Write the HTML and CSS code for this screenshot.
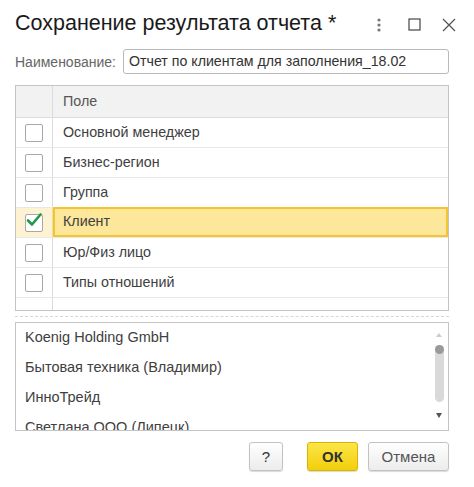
FILE: index.html
```html
<!DOCTYPE html>
<html lang="ru">
<head>
<meta charset="utf-8">
<link rel="stylesheet" href="styles.css">
</head>
<body>
<div class="dialog">
  <div class="titlebar">
    <div class="title">Сохранение результата отчета *</div>
    <div class="tools">
      <svg class="ico kebab" width="8" height="14" viewBox="0 0 8 14"><circle cx="4" cy="2" r="1.6" fill="#777"/><circle cx="4" cy="7" r="1.6" fill="#777"/><circle cx="4" cy="12" r="1.6" fill="#777"/></svg>
      <svg class="ico square" width="13" height="13" viewBox="0 0 13 13"><rect x="1" y="1" width="11" height="11" fill="none" stroke="#444" stroke-width="1.2"/></svg>
      <svg class="ico close" width="14" height="14" viewBox="0 0 14 14"><path d="M1 1 L13 13 M13 1 L1 13" stroke="#555" stroke-width="1.3" fill="none"/></svg>
    </div>
  </div>

  <div class="namerow">
    <span class="label">Наименование:</span>
    <div class="input">Отчет по клиентам для заполнения_18.02</div>
  </div>

  <div class="grid">
    <div class="row head"><div class="cb-cell"></div><div class="txt">Поле</div></div>
    <div class="row"><div class="cb-cell"><span class="cb"></span></div><div class="txt">Основной менеджер</div></div>
    <div class="row"><div class="cb-cell"><span class="cb"></span></div><div class="txt">Бизнес-регион</div></div>
    <div class="row"><div class="cb-cell"><span class="cb"></span></div><div class="txt">Группа</div></div>
    <div class="row sel"><div class="cb-cell"><span class="cb"><svg class="check" width="18" height="16" viewBox="0 0 18 16"><path d="M3 8.5 L7 12.5 L15.5 2.5" stroke="#1f9a4a" stroke-width="2.6" fill="none" stroke-linecap="round" stroke-linejoin="round"/></svg></span></div><div class="txt">Клиент</div></div>
    <div class="row"><div class="cb-cell"><span class="cb"></span></div><div class="txt">Юр/Физ лицо</div></div>
    <div class="row"><div class="cb-cell"><span class="cb"></span></div><div class="txt">Типы отношений</div></div>
    <div class="filler"><div class="cb-cell"></div><div class="txt"></div></div>
  </div>

  <div class="sep"></div>

  <div class="listbox">
    <div class="items">
      <div class="item">Koenig Holding GmbH</div>
      <div class="item">Бытовая техника (Владимир)</div>
      <div class="item">ИнноТрейд</div>
      <div class="item">Светлана ООО (Липецк)</div>
    </div>
    <div class="scroll">
      <span class="arrow up"></span>
      <span class="track"><span class="thumb"></span></span>
      <span class="arrow down"></span>
    </div>
  </div>

  <div class="buttons">
    <button class="btn help">?</button>
    <button class="btn ok">ОК</button>
    <button class="btn cancel">Отмена</button>
  </div>
</div>
</body>
</html>
```

FILE: styles.css
```css
* { box-sizing: border-box; }
html, body { margin: 0; padding: 0; background: #fff; }
body { font-family: "Liberation Sans", Arial, sans-serif; color: #404040; }

.dialog {
  width: 474px;
  height: 487px;
  padding: 0 25px 0 15px;
  display: flex;
  flex-direction: column;
}

.titlebar {
  height: 49px;
  display: flex;
  align-items: center;
  justify-content: space-between;
  margin-right: -25px;
  padding-right: 18px;
}
.title {
  font-size: 21.5px;
  color: #1a1a1a;
  padding-bottom: 2px;
}
.tools { display: flex; align-items: center; }
.ico { display: block; }
.kebab { margin-right: 25px; }
.square { margin-right: 21px; }

.namerow {
  display: flex;
  align-items: center;
  height: 25px;
}
.label {
  font-size: 14px;
  color: #666;
  width: 108px;
}
.input {
  flex: 1;
  height: 25px;
  border: 1px solid #b9b9b9;
  border-radius: 3px;
  font-size: 14.2px;
  color: #333;
  padding: 0 5px;
  line-height: 23px;
}

.grid {
  margin-top: 11px;
  border: 1px solid #c4c4c4;
}
.row, .filler {
  display: flex;
  height: 30px;
  border-bottom: 1px solid #e8e8e8;
}
.filler { height: 12px; border-bottom: none; }
.row.head {
  height: 32px;
  background: #f2f2f2;
  border-bottom: 1px solid #dcdcdc;
}
.cb-cell {
  width: 37px;
  border-right: 1px solid #dcdcdc;
  display: flex;
  align-items: center;
  justify-content: center;
  flex-shrink: 0;
}
.txt {
  flex: 1;
  font-size: 14.3px;
  line-height: 29px;
  padding-left: 10px;
  color: #404040;
}
.head .txt { color: #555; line-height: 31px; }
.cb {
  position: relative;
  width: 18px;
  height: 18px;
  border: 1px solid #a8a8a8;
  border-radius: 2px;
  background: #fff;
  display: block;
}
.check { position: absolute; left: -1px; top: -3px; }
.row.sel { background: #fdf3d2; }
.row.sel .cb-cell { border-right-color: #f0dca0; }
.row.sel .txt {
  background: #fde79a;
  border: 2px solid #f4c433;
  line-height: 25px;
  padding-left: 8px;
  margin: -1px 0 0 0;
}

.sep {
  margin-top: 5px;
  border-top: 1px dashed #d6d6d6;
  height: 0;
}

.listbox {
  margin-top: 5px;
  height: 109px;
  border: 1px solid #c4c4c4;
  display: flex;
  overflow: hidden;
}
.items { flex: 1; padding-left: 9px; }
.item {
  height: 30px;
  line-height: 29px;
  font-size: 14.5px;
  color: #404040;
}
.scroll {
  width: 14px;
  margin-right: 2px;
  display: flex;
  flex-direction: column;
  align-items: center;
  padding-top: 10px;
}
.arrow {
  width: 0; height: 0;
  border-left: 3px solid transparent;
  border-right: 3px solid transparent;
}
.arrow.up { border-bottom: 4px solid #ccc; }
.arrow.down { border-top: 5px solid #555; margin-top: 11px; }
.track {
  margin-top: 8px;
  width: 9px;
  height: 57px;
  background: #d9d9d9;
  border-radius: 5px;
  position: relative;
}
.thumb {
  position: absolute;
  left: 0; top: 0;
  width: 9px; height: 9px;
  border-radius: 50%;
  background: #9a9a9a;
}

.buttons {
  margin-top: 11px;
  display: flex;
  justify-content: flex-end;
}
.btn {
  height: 29px;
  font-family: "Liberation Sans", Arial, sans-serif;
  font-size: 15px;
  border-radius: 3px;
  border: 1px solid #c2c2c2;
  background: linear-gradient(#ffffff, #ececec);
  box-shadow: 0 1px 1px rgba(0,0,0,0.15);
  color: #444;
  padding: 0;
}
.help { width: 34px; color: #333; }
.ok {
  width: 51px;
  margin-left: 24px;
  background: linear-gradient(#fce54a, #f3cf0a);
  border-color: #d9b400;
  font-weight: bold;
  color: #333;
}
.cancel { width: 81px; margin-left: 10px; color: #555; }
```
